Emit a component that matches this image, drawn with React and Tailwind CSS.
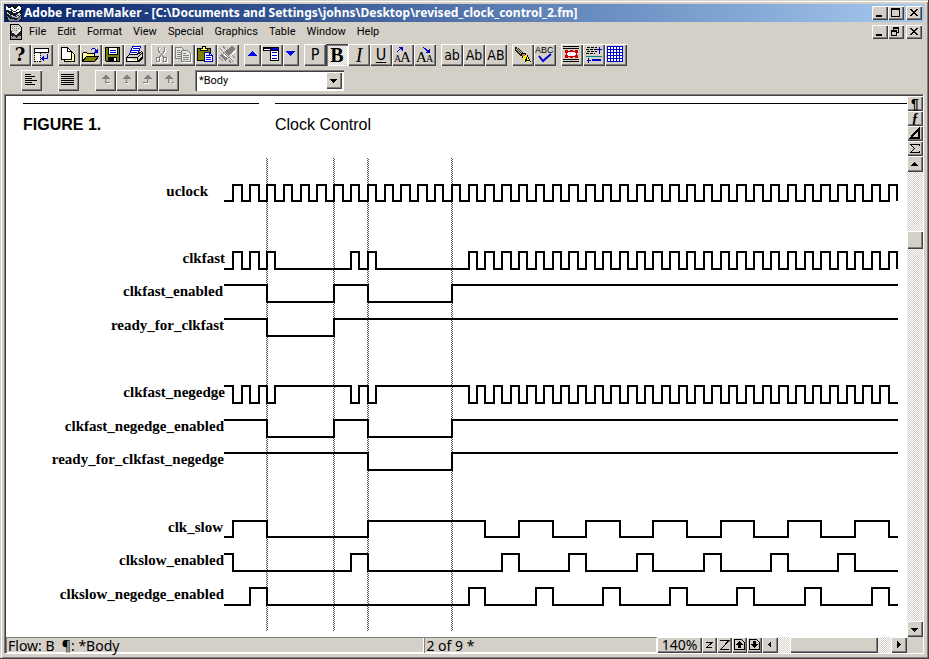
import { useState } from 'react';

const RAISED =
  'bg-[#d4d0c8] shadow-[inset_1px_1px_0_#fff,inset_-1px_-1px_0_#404040,inset_-2px_-2px_0_#808080]';
const CHECKER =
  'bg-[repeating-conic-gradient(#ffffff_0_25%,#d4d0c8_0_50%)] bg-[length:2px_2px]';

// Waveforms: `start` is the level at the left edge, `edges` are the half-cycles where it flips
const HALF_CYCLE = 8.4;
const FIRST_EDGE = 233.3;
const WAVE_LEFT = 224;
const WAVE_RIGHT = 898;

const range = (from, to) => Array.from({ length: to - from + 1 }, (_, i) => from + i);
const pulses = (from, to, width) =>
  range(0, Math.floor((to - from) / 8)).flatMap((i) => [from + i * 8, from + i * 8 + width]);

const SIGNALS = [
  { name: 'uclock', end: 208, high: 185, low: 201, start: 0, edges: range(0, 79) },
  { name: 'clkfast', end: 225, high: 252, low: 269, start: 0, edges: [...range(0, 5), ...range(14, 17), ...range(28, 79)] },
  { name: 'clkfast_enabled', end: 223, high: 285, low: 302, start: 1, edges: [4, 12, 16, 26] },
  { name: 'ready_for_clkfast', end: 224, high: 319, low: 336, start: 1, edges: [4, 12] },
  { name: 'clkfast_negedge', end: 225, high: 386, low: 403, start: 1, edges: [...range(0, 5), ...range(14, 17), ...range(28, 78)] },
  { name: 'clkfast_negedge_enabled', end: 224, high: 420, low: 437, start: 1, edges: [4, 12, 16, 26] },
  { name: 'ready_for_clkfast_negedge', end: 224, high: 453, low: 470, start: 1, edges: [16, 26] },
  { name: 'clk_slow', end: 223, high: 521, low: 537, start: 0, edges: [0, 4, 16, 30, ...pulses(34, 74, 4)] },
  { name: 'clkslow_enabled', end: 224, high: 554, low: 571, start: 1, edges: [0, 14, 16, ...pulses(32, 72, 2)] },
  { name: 'clkslow_negedge_enabled', end: 224, high: 588, low: 605, start: 0, edges: [2, 4, ...pulses(28, 76, 2)] },
];

const MARKERS = [4, 12, 16, 26];

const edgeX = (k) => Math.round(FIRST_EDGE + k * HALF_CYCLE);

function wavePath({ high, low, start, edges }) {
  let level = start;
  let d = `M${WAVE_LEFT} ${level ? high : low}`;
  edges.forEach((k) => {
    level = 1 - level;
    d += `H${edgeX(k)}V${level ? high : low}`;
  });
  return edges[edges.length - 1] === 79 ? d : `${d}H${WAVE_RIGHT}`;
}

const TimingDiagram = () => (
  <svg width="901" height="495" viewBox="6 137 901 495" className="block shrink-0" shapeRendering="crispEdges">
    {MARKERS.map((k) => (
      <g key={k} stroke="#555">
        <line x1={edgeX(k) - 0.5} x2={edgeX(k) - 0.5} y1="158" y2="631" strokeDasharray="1 1" />
        <line x1={edgeX(k) + 0.5} x2={edgeX(k) + 0.5} y1="159" y2="631" strokeDasharray="1 1" />
      </g>
    ))}
    {SIGNALS.map((s) => (
      <g key={s.name}>
        <text x={s.end} y={s.high + 11} textAnchor="end" className="fill-black font-['Liberation_Serif',serif] text-[15px] font-bold">
          {s.name}
        </text>
        <path d={wavePath(s)} fill="none" stroke="#000" strokeWidth="2" />
      </g>
    ))}
  </svg>
);

// Icons
const Icon = ({ children, w = 22, h = 22 }) => (
  <svg width={w} height={h} viewBox={`0 0 ${w} ${h}`} fill="none" className="block" shapeRendering="crispEdges" aria-hidden="true">
    {children}
  </svg>
);

const AppIcon = () => (
  <Icon w={16} h={16}>
    <path d="M0 0h16v16H0z" fill="#101820" />
    <path d="M0 1l3 2 3-1 3 2 3-3 3 1v2l-3 3-4 1-3-2-5-1z" fill="#fff" />
    <path d="M1 7l4 3 4 1 4-3 2 1-4 4-4 0-6-4z" fill="#c9c9d6" />
    <path d="M1 11l4 3 5 1 5-4v3l-3 2H3z" fill="#7b7d94" />
    <path d="M4 4l4 3 5-3M2 9l5 4 6-3" stroke="#333a55" />
  </Icon>
);

const DocIcon = () => (
  <Icon w={12} h={16}>
    <path d="M.5 .5h8l3 3v12H.5z" fill="#d8d8c8" stroke="#000" />
    <path d="M2 2.500h6M2 4.500h7M2 6.500h8" stroke="#888" strokeDasharray="1 1" />
    <path d="M1 7l5 4 5-4v5l-5 3-5-3z" fill="#222" />
    <path d="M1 13l3-1 2 2 3-2 2 1v2H1z" fill="#999" />
    <path d="M2 8h2v1H2zM8 6h2v2H8z" fill="#fff" />
  </Icon>
);

const SwitchBarIcon = () => (
  <Icon>
    <path d="M3.500 4.500h14v4h-14z" fill="#fff" stroke="#000" />
    <path d="M4 9h5v8H4z" fill="#fff" />
    <path d="M3.500 9v9M9.500 9v9M4 17.500h6" stroke="#000" strokeDasharray="1 1" />
    <path d="M16.500 10v4.500H12" stroke="#0000ce" />
    <path d="M13 12v5l-3-2.500z" fill="#0000ce" />
  </Icon>
);

const NewIcon = () => (
  <Icon>
    <path d="M6.500 6.500h6l4 4v7h-10z" fill="#ffffa0" stroke="#000" />
    <path d="M3.500 3.500h6l4 4v8h-10z" fill="#fff" stroke="#000" />
    <path d="M9.500 4v3.500h4" stroke="#000" />
  </Icon>
);

const OpenIcon = () => (
  <Icon>
    <path d="M2.500 17.500v-8l1-1h3l1 1h7v3" fill="#ffff99" stroke="#000" />
    <path d="M2.500 17.500l4-5h12l-4 5z" fill="#808000" stroke="#000" />
    <path d="M3 10h11v2H6l-3 4z" fill="#ffff99" />
    <path d="M10.500 6.500l2-2h2l2 3" stroke="#0000ce" />
    <path d="M18 4v5h-5z" fill="#0000ce" />
  </Icon>
);

const SaveIcon = () => (
  <Icon>
    <path d="M3.500 3.500h14v14h-13l-1-1z" fill="#808000" stroke="#000" />
    <path d="M6.500 3.500h9v7h-9z" fill="#fff" stroke="#000" />
    <path d="M8 6.500h6M8 8.500h6" stroke="#0000ce" />
    <path d="M6 13h9v5H6z" fill="#000" />
    <path d="M12 14h2v3h-2z" fill="#fff" />
  </Icon>
);

const PrintIcon = () => (
  <Icon>
    <path d="M8.500 2.500h8l-3 8h-8z" fill="#fff" stroke="#0000ce" />
    <path d="M9 4.500h6M8 6.500h6M7 8.500h6" stroke="#0000ce" />
    <path d="M2.500 13.500l3-3h8l4-3 1 1v4l-5 5h-11z" fill="#d4d0c8" stroke="#000" />
    <path d="M2.500 13.500h11l5-5M13.500 13.500v4" stroke="#000" />
    <path d="M4 15h9v2H4z" fill="#fff" />
    <path d="M3 17h11l5-5v2l-4 4H4z" fill="#000" />
    <path d="M9 15h3v1H9z" fill="#e0d000" />
  </Icon>
);

const CutIcon = () => (
  <Icon>
    <g stroke="#fff" transform="translate(1 1)">
      <path d="M7.500 3v4l5 6M13.500 3v4l-5 6" />
      <path d="M5.500 13.500h3v4h-3zM12.500 13.500h3v4h-3z" />
    </g>
    <g stroke="#808080">
      <path d="M7.500 3v4l5 6M13.500 3v4l-5 6" />
      <path d="M5.500 13.500h3v4h-3zM12.500 13.500h3v4h-3z" />
    </g>
  </Icon>
);

const CopyIcon = () => (
  <Icon>
    <path d="M2.500 3.500h6l3 3v8h-9z" fill="#e8e6e0" stroke="#808080" />
    <path d="M4 6.500h3M4 8.500h5M4 10.500h5M4 12.500h5" stroke="#808080" />
    <path d="M8.500 6.500h6l3 3v8h-9z" fill="#e8e6e0" stroke="#808080" />
    <path d="M10 9.500h3M10 11.500h6M10 13.500h6M10 15.500h6" stroke="#808080" />
    <path d="M9 18.500h9.500V10" stroke="#fff" />
  </Icon>
);

const PasteIcon = () => (
  <Icon>
    <path d="M2.500 4.500h13v12h-13z" fill="#808000" stroke="#000" />
    <path d="M5.500 5.500v-1h2v-2h3v2h2v2h-7z" fill="#ffff60" stroke="#000" />
    <path d="M9.500 8.500h5l3 3v6h-8z" fill="#fff" stroke="#0000ce" />
    <path d="M11 11.500h3M11 13.500h5M11 15.500h5M14.500 9v2.500H17" stroke="#0000ce" />
  </Icon>
);

const BrushIcon = () => (
  <Icon>
    <path d="M15 2l3 3-6 7-5-4z" fill="#808080" />
    <path d="M6 8l6 5-3 4-6-5z" fill="#808080" />
    <path d="M5 9l6 5" stroke="#fff" />
    <path d="M3 4l3 3M6 2l2 3M12 13l5 5M15 11l3 3M2 13l4 4M12 16l2 3" stroke="#808080" />
    <path d="M4 4l3 3M13 13l5 5M19 6l-5 6" stroke="#fff" />
  </Icon>
);

const TableIcon = () => (
  <Icon>
    <path d="M2 3h16v4H2z" fill="#000" />
    <path d="M3 5h6v1H3z" fill="#fff" />
    <path d="M9.500 6.500h8v10h-8z" fill="#fff" stroke="#000" />
    <path d="M10 4h7v2h-7z" fill="#0000ce" />
    <path d="M11 8.500h5M11 11.500h5M11 14.500h5" stroke="#0000ce" />
  </Icon>
);

const LETTER_A = "fill-black font-['Liberation_Serif',serif]";

const GrowIcon = () => (
  <Icon>
    <text x="2" y="18" className={`${LETTER_A} text-[10px]`}>A</text>
    <text x="8" y="18" className={`${LETTER_A} text-[15px]`}>A</text>
    <path d="M4.500 8.500l5-5" stroke="#0000ce" />
    <path d="M6 3h5v5z" fill="#0000ce" />
  </Icon>
);

const ShrinkIcon = () => (
  <Icon>
    <text x="2" y="18" className={`${LETTER_A} text-[15px]`}>A</text>
    <text x="12" y="18" className={`${LETTER_A} text-[10px]`}>A</text>
    <path d="M9.500 3.500l5 4" stroke="#0000ce" />
    <path d="M16 4v5h-5z" fill="#0000ce" />
  </Icon>
);

const FindIcon = () => (
  <Icon>
    <path d="M3 3l3 1 5 5-3 3-5-6z" fill="#222" />
    <path d="M4 5l5 5M5 4l5 5" stroke="#d8c898" />
    <path d="M9 10l4-1 1 3-3 2z" fill="#e07030" stroke="#000" />
    <path d="M11 12l3-1 4 5-1 2h-4z" fill="#ffff00" />
    <path d="M13 18l2.500-6 3 6M14 16h4" stroke="#000" />
  </Icon>
);

const SpellIcon = () => (
  <svg width="22" height="22" viewBox="0 0 22 22" fill="none" className="block" aria-hidden="true">
    <text x="1" y="9" className="fill-black font-['Liberation_Sans',sans-serif] text-[9px]">ABC</text>
    <path d="M5 12l4 5 8-7" stroke="#0000ce" strokeWidth="2" />
  </svg>
);

const FrameIcon = () => (
  <Icon>
    <path d="M2 2.500h16M2 4.500h16M2 15.500h16M2 17.500h16" stroke="#000" />
    <path d="M5.500 7.500h10v5h-10z" fill="#fff" stroke="#d00000" />
    <path d="M4 6h3v3H4zM9 6h3v2H9zM14 6h3v3h-3zM4 11h3v3H4zM9 12h3v2H9zM14 11h3v3h-3z" fill="#d00000" />
  </Icon>
);

const AnchorIcon = () => (
  <Icon>
    <path d="M4 3.500h10M3 5.500h11M4 7.500h10M3 9.500h9" stroke="#000" strokeDasharray="3 1" />
    <path d="M16.500 3v7M14 5.500h5" stroke="#0000ce" />
    <path d="M3 12.500h16" stroke="#008080" />
    <path d="M5.500 14v5M4 16.500h4" stroke="#0000ce" />
    <path d="M9 15h9v2H9z" fill="#0000ce" />
  </Icon>
);

const GridIcon = () => (
  <Icon>
    <path d="M2.500 2.500h15v15h-15z" fill="#fff" stroke="#0000ce" />
    <path d="M5.500 3v14M8.500 3v14M11.500 3v14M14.500 3v14M3 5.500h14M3 8.500h14M3 11.500h14M3 14.500h14" stroke="#0000ce" />
  </Icon>
);

const AlignIcon = ({ full }) => (
  <Icon w={21} h={21}>
    <path
      d={full ? 'M3 4.500h13M3 6.500h13M3 8.500h13M3 10.500h13M3 12.500h13M3 14.500h13' : 'M4 4.500h6M4 6.500h10M4 8.500h7M4 10.500h12M4 12.500h7M4 14.500h10'}
      stroke="#000"
    />
  </Icon>
);

const TabIcon = ({ tail }) => (
  <Icon w={21} h={21}>
    <path d={tail} stroke="#fff" transform="translate(1 1)" />
    <path d="M10.500 6v7" stroke="#808080" />
    <path d={tail} stroke="#808080" />
    <path d="M6 9l4-4h1l4 4z" fill="#808080" />
  </Icon>
);

const TAB_TAILS = ['M11 12.500h4', 'M9 12.500h3', 'M6 12.500h5', 'M14 12.500h2'];

const Triangle = ({ dir, w = 16, h = 16, color = '#000' }) => {
  const points = {
    up: 'M4 10h7L8 6H7z',
    down: 'M4 7h7L8 11H7z',
    left: 'M9 4v7L6 8V7z',
    right: 'M6 4v7l4-3V7z',
  };
  return (
    <Icon w={w} h={h}>
      <path d={points[dir]} fill={color} />
    </Icon>
  );
};

const BlueTriangle = ({ up }) => (
  <Icon w={16}>
    <path d={up ? 'M3 12h9L8 7H7z' : 'M3 7h9L8 12H7z'} fill="#0000ee" />
  </Icon>
);

const Button = ({ label, size = 'h-[22px] w-[22px]', pressed, onClick, className = '', children }) => (
  <button
    type="button"
    aria-label={label}
    aria-pressed={pressed}
    onClick={onClick}
    className={`${size} flex shrink-0 items-center justify-center leading-none text-black ${
      pressed ? `${CHECKER} shadow-[inset_1px_1px_0_#404040,inset_2px_2px_0_#808080,inset_-1px_-1px_0_#fff]` : RAISED
    } ${className}`}
  >
    {children}
  </button>
);

const WindowButtons = ({ restore }) => (
  <div className="flex">
    <Button label="Minimize" size="h-[14px] w-4">
      <Icon w={16} h={14}><path d="M4 9h6v2H4z" fill="#000" /></Icon>
    </Button>
    <Button label={restore ? 'Restore' : 'Maximize'} size="h-[14px] w-4">
      <Icon w={16} h={14}>
        {restore ? (
          <path d="M5.500 5V2.500h5v5H9M5 3h6M3.500 5.500h5v5h-5zM3 6h6" stroke="#000" />
        ) : (
          <path d="M3.500 2.500h8v8h-8zM3 3h9" stroke="#000" />
        )}
      </Icon>
    </Button>
    <Button label="Close" size="h-[14px] w-4" className="ml-0.5">
      <Icon w={16} h={14}><path d="M4.500 3l7 7M11.500 3l-7 7" stroke="#000" strokeWidth="1.500" /></Icon>
    </Button>
  </div>
);

const MENUS = ['File', 'Edit', 'Format', 'View', 'Special', 'Graphics', 'Table', 'Window', 'Help'];

const SERIF = "font-['Liberation_Serif',serif] text-[20px]";
const SANS = "font-['DejaVu_Sans_Condensed',sans-serif] text-[16px]";
const CASE_TEXT = "font-['DejaVu_Sans_Condensed',sans-serif] text-[14px]";

const Toolbar = () => {
  const [bold, setBold] = useState(true);
  return (
    <div className="mt-0.5 flex gap-[5px] pl-[5px]">
      <div className="flex">
        <Button label="Help" className="font-['DejaVu_Serif',serif] text-[18px] font-bold">?</Button>
        <Button label="Switch QuickAccess bar"><SwitchBarIcon /></Button>
      </div>
      <div className="flex">
        <Button label="New"><NewIcon /></Button>
        <Button label="Open"><OpenIcon /></Button>
        <Button label="Save"><SaveIcon /></Button>
        <Button label="Print"><PrintIcon /></Button>
      </div>
      <div className="flex">
        <Button label="Cut"><CutIcon /></Button>
        <Button label="Copy"><CopyIcon /></Button>
        <Button label="Paste"><PasteIcon /></Button>
        <Button label="Clear"><BrushIcon /></Button>
      </div>
      <div className="flex">
        <Button label="Previous" size="h-[22px] w-[17px]"><BlueTriangle up /></Button>
        <Button label="Table"><TableIcon /></Button>
        <Button label="Next" size="h-[22px] w-4"><BlueTriangle /></Button>
      </div>
      <div className="flex">
        <Button label="Plain" className={SANS}>P</Button>
        <Button label="Bold" pressed={bold} onClick={() => setBold(!bold)} className={`${SERIF} font-bold`}>B</Button>
        <Button label="Italic" className={`${SERIF} italic`}>I</Button>
        <Button label="Underline" className={`${SANS} underline underline-offset-2`}>U</Button>
        <Button label="Increase size"><GrowIcon /></Button>
        <Button label="Decrease size"><ShrinkIcon /></Button>
      </div>
      <div className="flex">
        <Button label="Lowercase" className={CASE_TEXT}>ab</Button>
        <Button label="Initial caps" className={CASE_TEXT}>Ab</Button>
        <Button label="Uppercase" className={CASE_TEXT}>AB</Button>
      </div>
      <div className="flex">
        <Button label="Find"><FindIcon /></Button>
        <Button label="Spelling"><SpellIcon /></Button>
      </div>
      <div className="flex">
        <Button label="Anchored frame"><FrameIcon /></Button>
        <Button label="Footnote"><AnchorIcon /></Button>
        <Button label="Grid"><GridIcon /></Button>
      </div>
    </div>
  );
};

const FormatBar = () => (
  <div className="mt-1 flex gap-4 pl-[17px]">
    <Button label="Alignment" size="h-[21px] w-[21px]"><AlignIcon /></Button>
    <Button label="Spacing" size="h-[21px] w-[21px]"><AlignIcon full /></Button>
    <div className="flex">
      {TAB_TAILS.map((tail, i) => (
        <Button key={tail} label={`Tab ${i + 1}`} size="h-[21px] w-[21px]"><TabIcon tail={tail} /></Button>
      ))}
    </div>
    <div className="relative h-[21px] w-[149px] bg-white shadow-[inset_1px_1px_0_#808080,inset_2px_2px_0_#404040,inset_-1px_-1px_0_#fff]">
      <select aria-label="Paragraph format" className="block h-full w-full appearance-none bg-transparent pl-1 font-['Roboto',sans-serif] text-[11px] leading-4 text-black outline-none">
        <option>*Body</option>
      </select>
      <div className={`pointer-events-none absolute top-0.5 right-0.5 h-[17px] w-4 ${RAISED}`}>
        <Triangle dir="down" />
      </div>
    </div>
  </div>
);

const VerticalBar = () => (
  <div className={`flex w-4 shrink-0 flex-col ${CHECKER}`}>
    <Button label="Paragraph catalog" size="h-[15px] w-4" className="font-['Liberation_Sans',sans-serif] text-[14px] font-bold">¶</Button>
    <Button label="Character catalog" size="h-[15px] w-4" className="font-['Liberation_Serif',serif] text-[14px] font-bold italic">ƒ</Button>
    <Button label="Tools" size="h-[15px] w-4">
      <Icon w={16} h={15}><path d="M4 11.500L12 3v8.500z" stroke="#000" strokeWidth="2" /></Icon>
    </Button>
    <Button label="Equations" size="h-[15px] w-4">
      <Icon w={16} h={15}><path d="M12.500 5V3.500h-9l4 4-4 4h9V10" stroke="#000" /></Icon>
    </Button>
    <Button label="Scroll up" size="h-4 w-4"><Triangle dir="up" /></Button>
    <div className="flex-[59]" />
    <Button label="Scroll position" size="h-[18px] w-4" />
    <div className="flex-[372]" />
    <Button label="Scroll down" size="h-4 w-4"><Triangle dir="down" /></Button>
  </div>
);

const PageTurnIcon = ({ up }) => (
  <Icon w={15} h={16}>
    <path d="M2.500 2.500h7l3 3v7h-10z" fill="#d4d0c8" stroke="#000" />
    <path d={up ? 'M4 8l3-4h1l3 4zM6 8h3v3H6z' : 'M4 7l3 4h1l3-4zM6 4h3v3H6z'} fill="#000" />
  </Icon>
);

const STATUS_CELL = 'h-4 pl-0.5 whitespace-pre shadow-[inset_1px_1px_0_#808080,inset_-1px_-1px_0_#fff]';

const StatusBar = () => (
  <div className="flex h-4 text-[14px] leading-[18px] text-black">
    <div className={`${STATUS_CELL} flex-[419]`}>Flow: B  ¶: *Body</div>
    <div className={`${STATUS_CELL} flex-[232]`}>2 of 9 *</div>
    <Button label="Zoom" size="h-4 w-[45px]" className="text-[14px]">140%</Button>
    <Button label="Zoom out" size="h-4 w-[15px]">
      <Icon w={15} h={16}><path d="M4 5.500h6L4.500 10.500H10" stroke="#000" /></Icon>
    </Button>
    <Button label="Zoom in" size="h-4 w-[15px]">
      <Icon w={15} h={16}><path d="M3 3.500h9L3.500 12.500H12" stroke="#000" /></Icon>
    </Button>
    <Button label="Previous page" size="h-4 w-[15px]"><PageTurnIcon up /></Button>
    <Button label="Next page" size="h-4 w-[15px]"><PageTurnIcon /></Button>
    <Button label="Scroll left" size="h-4 w-4"><Triangle dir="left" /></Button>
    <div className={`flex w-[113px] pl-3 ${CHECKER}`}>
      <Button label="Horizontal scroll position" size="h-4 w-[88px]" />
    </div>
    <Button label="Scroll right" size="h-4 w-4"><Triangle dir="right" /></Button>
    <div className="w-4 bg-[#d4d0c8]" />
  </div>
);

export default function App() {
  return (
    <div className="flex h-screen flex-col overflow-hidden bg-[#d4d0c8] pt-1 pr-[5px] pb-[5px] pl-1 font-['Noto_Sans',sans-serif] shadow-[inset_-1px_-1px_0_#404040,inset_1px_1px_0_#d4d0c8,inset_2px_2px_0_#fff,inset_-2px_-2px_0_#808080]">
      <header className="flex h-[18px] shrink-0 items-center bg-linear-to-r from-[#0a246a] to-[#a6caf0] pr-0.5 pl-0.5">
        <AppIcon />
        <h1 className="ml-0.5 flex-1 truncate text-[12px] leading-[18px] font-bold text-white">
          Adobe FrameMaker - [C:\Documents and Settings\johns\Desktop\revised_clock_control_2.fm]
        </h1>
        <WindowButtons />
      </header>

      <nav className="flex h-5 shrink-0 items-center pr-0.5 pl-1.5">
        <DocIcon />
        <div className="ml-[7px] flex flex-1 gap-[11px] font-['Roboto',sans-serif] text-[11px] leading-[18px] text-black">
          {MENUS.map((menu) => (
            <button key={menu} type="button">{menu}</button>
          ))}
        </div>
        <WindowButtons restore />
      </nav>

      <Toolbar />
      <FormatBar />

      <div className="mt-[3px] flex min-h-0 flex-1 flex-col border-t border-r border-b border-l border-t-[#808080] border-r-white border-b-white border-l-[#808080]">
        <div className="flex min-h-0 flex-1 flex-col border-t border-l border-[#404040]">
          <div className="flex min-h-0 flex-1">
            <main className="min-w-0 flex-1 overflow-hidden bg-white text-black">
              <div className="flex gap-4 pt-[7px] pl-[17px] font-['Liberation_Sans',sans-serif] text-[16px] leading-6">
                <h2 className="w-[236px] border-t border-black pt-[9px] font-bold">FIGURE 1.</h2>
                <p className="flex-1 border-t border-black pt-[9px]">Clock Control</p>
              </div>
              <TimingDiagram />
            </main>
            <VerticalBar />
          </div>
          <StatusBar />
        </div>
      </div>
    </div>
  );
}
